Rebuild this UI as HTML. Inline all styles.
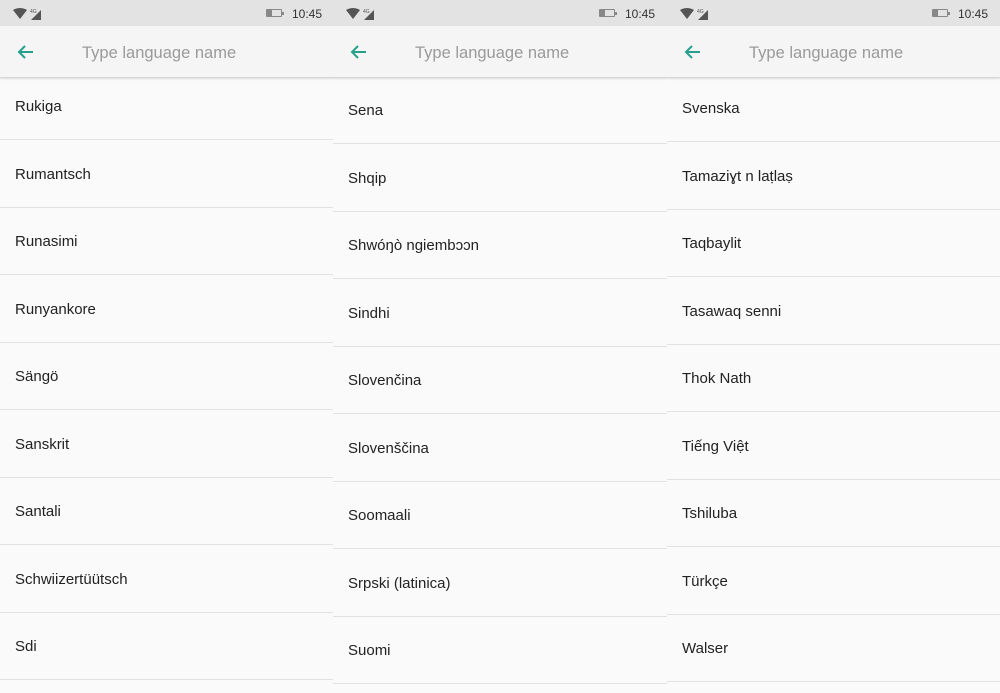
<!DOCTYPE html>
<html><head><meta charset="utf-8"><style>
*{margin:0;padding:0;box-sizing:border-box}
body{width:1000px;height:693px;overflow:hidden;background:#fafafa;font-family:"Liberation Sans",sans-serif;position:relative}
.p{position:absolute;top:0;width:334px;height:693px;overflow:hidden;background:#fafafa}
.sb{position:absolute;left:0;top:0;width:100%;height:26px;background:#e3e3e3}
.hd{position:absolute;left:0;top:26px;width:100%;height:52px;background:#f5f5f5;border-bottom:1px solid #d6d6d6;box-shadow:0 1px 2px rgba(0,0,0,.12)}
.hd .ph{position:absolute;left:82px;top:18px;font-size:16.5px;color:#9a9a9a}
.hd svg{position:absolute;left:17px}
.time{position:absolute;right:12px;top:7px;font-size:12px;color:#333}
.bat{position:absolute;right:52px;top:9px;width:16px;height:8px;border:1px solid #888;border-radius:1px}
.bat:before{content:"";position:absolute;left:0;top:0;width:5px;height:6px;background:#888}
.bat:after{content:"";position:absolute;right:-3px;top:2px;width:2px;height:3px;background:#888}
.wf{position:absolute;left:13px;top:8px}
.l{position:absolute;left:0;width:100%;height:68px;border-bottom:1px solid #e2e2e2}
.l span{position:absolute;left:15px;top:26px;font-size:15px;color:#222}
</style></head><body>

<div class="p" style="left:0">
<div class="sb"><svg class="wf" width="36" height="12" viewBox="0 0 36 12"><path d="M0 2 Q7 -2 14 2 L7 11 Z" fill="#555"/><text x="17" y="5" font-size="5" fill="#555" font-family="Liberation Sans">4G</text><path d="M18 12 L28 2 L28 12 Z" fill="#555"/></svg><div class="bat"></div><div class="time">10:45</div></div>
<div class="l" style="top:72px"><span>Rukiga</span></div>
<div class="l" style="top:140px"><span>Rumantsch</span></div>
<div class="l" style="top:207px"><span>Runasimi</span></div>
<div class="l" style="top:275px"><span>Runyankore</span></div>
<div class="l" style="top:342px"><span>Sängö</span></div>
<div class="l" style="top:410px"><span>Sanskrit</span></div>
<div class="l" style="top:477px"><span>Santali</span></div>
<div class="l" style="top:545px"><span>Schwiizertüütsch</span></div>
<div class="l" style="top:612px"><span>Sdi</span></div>
<div class="hd"><svg width="18" height="14" viewBox="0 0 18 14" style="top:19px"><path d="M16 7 H2 M8 1 L2 7 L8 13" stroke="#26a08c" stroke-width="2" fill="none"/></svg><div class="ph">Type language name</div></div>
</div>

<div class="p" style="left:333px">
<div class="sb"><svg class="wf" width="36" height="12" viewBox="0 0 36 12"><path d="M0 2 Q7 -2 14 2 L7 11 Z" fill="#555"/><text x="17" y="5" font-size="5" fill="#555" font-family="Liberation Sans">4G</text><path d="M18 12 L28 2 L28 12 Z" fill="#555"/></svg><div class="bat"></div><div class="time">10:45</div></div>
<div class="l" style="top:76px"><span>Sena</span></div>
<div class="l" style="top:144px"><span>Shqip</span></div>
<div class="l" style="top:211px"><span>Shwóŋò ngiembɔɔn</span></div>
<div class="l" style="top:279px"><span>Sindhi</span></div>
<div class="l" style="top:346px"><span>Slovenčina</span></div>
<div class="l" style="top:414px"><span>Slovenščina</span></div>
<div class="l" style="top:481px"><span>Soomaali</span></div>
<div class="l" style="top:549px"><span>Srpski (latinica)</span></div>
<div class="l" style="top:616px"><span>Suomi</span></div>
<div class="hd"><svg width="18" height="14" viewBox="0 0 18 14" style="top:19px"><path d="M16 7 H2 M8 1 L2 7 L8 13" stroke="#26a08c" stroke-width="2" fill="none"/></svg><div class="ph">Type language name</div></div>
</div>

<div class="p" style="left:667px;width:333px">
<div class="sb"><svg class="wf" width="36" height="12" viewBox="0 0 36 12"><path d="M0 2 Q7 -2 14 2 L7 11 Z" fill="#555"/><text x="17" y="5" font-size="5" fill="#555" font-family="Liberation Sans">4G</text><path d="M18 12 L28 2 L28 12 Z" fill="#555"/></svg><div class="bat"></div><div class="time">10:45</div></div>
<div class="l" style="top:74px"><span>Svenska</span></div>
<div class="l" style="top:142px"><span>Tamaziɣt n laṭlaṣ</span></div>
<div class="l" style="top:209px"><span>Taqbaylit</span></div>
<div class="l" style="top:277px"><span>Tasawaq senni</span></div>
<div class="l" style="top:344px"><span>Thok Nath</span></div>
<div class="l" style="top:412px"><span>Tiếng Việt</span></div>
<div class="l" style="top:479px"><span>Tshiluba</span></div>
<div class="l" style="top:547px"><span>Türkçe</span></div>
<div class="l" style="top:614px"><span>Walser</span></div>
<div class="hd"><svg width="18" height="14" viewBox="0 0 18 14" style="top:19px"><path d="M16 7 H2 M8 1 L2 7 L8 13" stroke="#26a08c" stroke-width="2" fill="none"/></svg><div class="ph">Type language name</div></div>
</div>

</body></html>
